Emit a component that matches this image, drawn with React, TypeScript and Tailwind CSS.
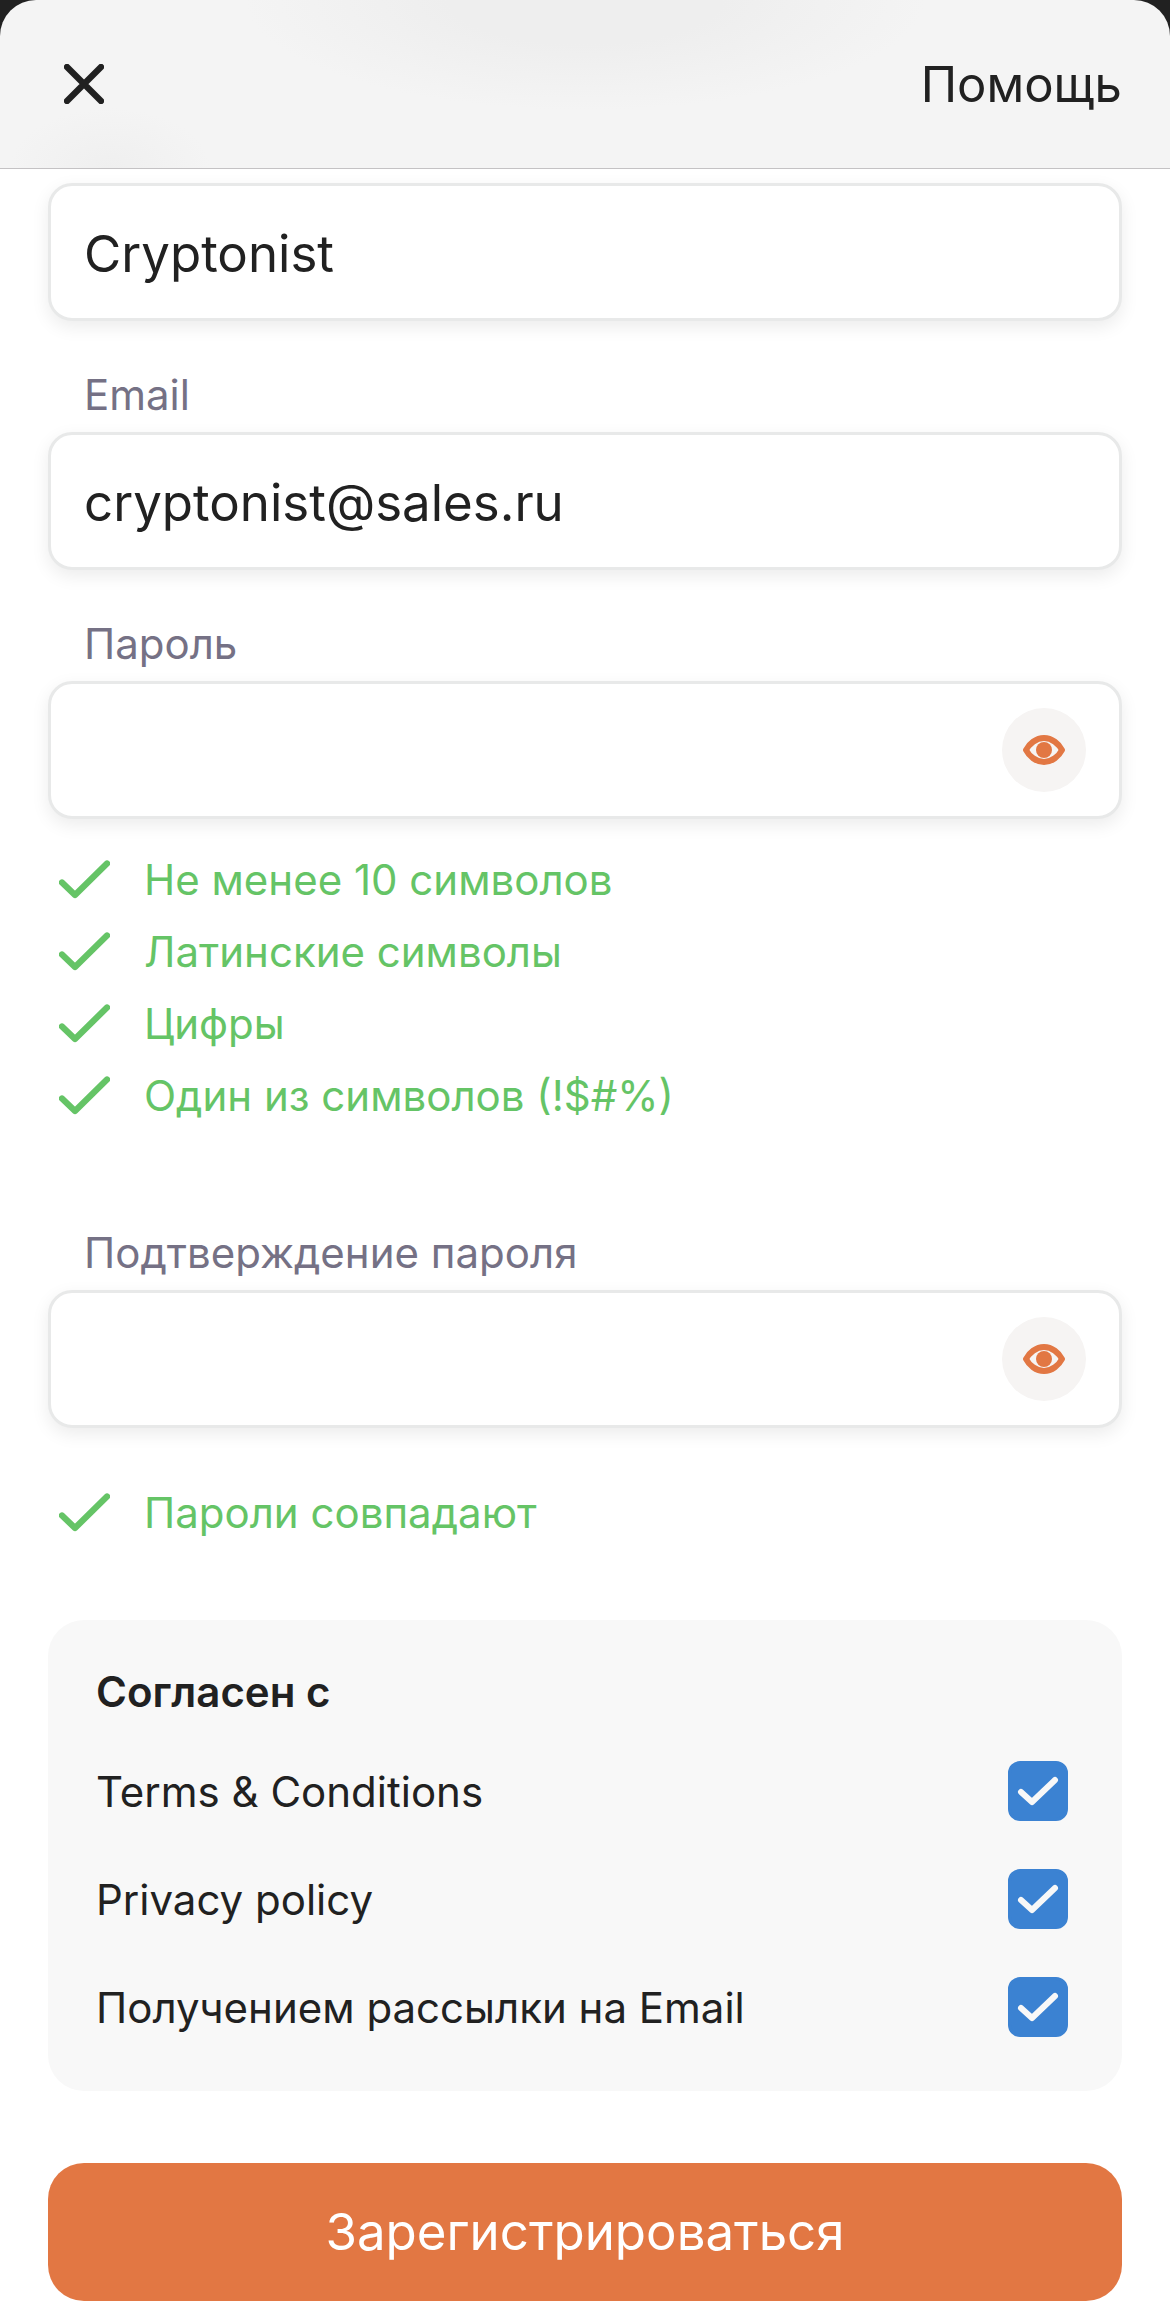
import React, { useState } from 'react';

const rules = ['Не менее 10 символов', 'Латинские символы', 'Цифры', 'Один из символов (!$#%)'];

const agreements = [
  { id: 'terms', label: 'Terms & Conditions' },
  { id: 'privacy', label: 'Privacy policy' },
  { id: 'newsletter', label: 'Получением рассылки на Email' },
];

const inputClass =
  'block w-full h-[138px] px-[33px] pt-[3px] rounded-3xl border-3 border-[#e8e9e9] bg-white text-[51px] text-[#212121] shadow-[0_6px_18px_rgba(0,0,0,0.08)] outline-none';

const CheckItem = ({ text }: { text: string }) => (
  <li className="flex h-[72px] items-center gap-[34px] pl-[11px] text-[42px] text-[#65c466]">
    <svg width="51" height="39" viewBox="0 0 51 39" fill="none" aria-hidden="true">
      <path d="M3 22.5L16 35L48 3.5" stroke="currentColor" strokeWidth="6.3" strokeLinecap="round" strokeLinejoin="round" />
    </svg>
    <span>{text}</span>
  </li>
);

const PasswordField = ({ id, label }: { id: string; label: string }) => {
  const [visible, setVisible] = useState(false);

  return (
    <div>
      <label htmlFor={id} className="block px-9 pb-3 text-[42px] leading-[51px] text-[#757185]">
        {label}
      </label>
      <div className="relative">
        <input id={id} type={visible ? 'text' : 'password'} className={inputClass} />
        <button
          type="button"
          aria-label="Показать пароль"
          onClick={() => setVisible(!visible)}
          className="absolute right-9 top-[27px] flex size-[84px] items-center justify-center rounded-full bg-[#f6f4f3]"
        >
          <svg width="42" height="30" viewBox="0 0 42 30" fill="none" aria-hidden="true">
            <path
              d="M3 15C6 9 13 3 21 3C29 3 36 9 39 15C36 21 29 27 21 27C13 27 6 21 3 15Z"
              stroke="#e27743"
              strokeWidth="6"
              strokeLinejoin="round"
            />
            <circle cx="21" cy="15" r="8" fill="#e27743" />
          </svg>
        </button>
      </div>
    </div>
  );
};

const App = () => {
  return (
    <div className="min-h-screen bg-white font-['Inter','Liberation_Sans',sans-serif] text-[#212121]">
      <div className="bg-[#212121]">
        <header className="flex h-[169px] items-center justify-between rounded-t-[36px] border-b border-[#c4c2c4] bg-[#f4f4f4] bg-[radial-gradient(ellipse_340px_110px_at_50%_0%,#eeeeee_40%,transparent),radial-gradient(ellipse_100px_60px_at_110px_100%,#efefef,transparent)] pl-16 pr-12">
          <button type="button" aria-label="Закрыть">
            <svg width="40" height="40" viewBox="0 0 40 40" fill="none" aria-hidden="true">
              <path d="M3 3L37 37M37 3L3 37" stroke="#212121" strokeWidth="6.3" strokeLinecap="round" />
            </svg>
          </button>
          <a href="#help" className="pt-[2px] text-[49px]">
            Помощь
          </a>
        </header>
      </div>

      <form className="px-12 pb-[17px] pt-[14px]" onSubmit={(e) => e.preventDefault()}>
        <input type="text" aria-label="Имя пользователя" defaultValue="Cryptonist" className={inputClass} />

        <div className="mt-12">
          <label htmlFor="email" className="block px-9 pb-3 text-[42px] leading-[51px] text-[#757185]">
            Email
          </label>
          <input id="email" type="email" defaultValue="cryptonist@sales.ru" className={inputClass} />
        </div>

        <div className="mt-12">
          <PasswordField id="password" label="Пароль" />
        </div>
        <ul className="mt-6">
          {rules.map((rule) => (
            <CheckItem key={rule} text={rule} />
          ))}
        </ul>

        <div className="mt-24">
          <PasswordField id="confirm" label="Подтверждение пароля" />
        </div>
        <ul className="mt-12">
          <CheckItem text="Пароли совпадают" />
        </ul>

        <fieldset className="mt-[72px] rounded-[36px] bg-[#f8f8f8] pb-[30px] pl-12 pr-[54px] pt-9">
          <h2 className="mb-[9px] text-[42px] font-semibold leading-[72px]">Согласен с</h2>
          {agreements.map((item) => (
            <div key={item.id} className="flex h-[108px] items-center justify-between text-[42px]">
              <label htmlFor={item.id}>{item.label}</label>
              <span className="relative size-[60px]">
                <input
                  id={item.id}
                  type="checkbox"
                  defaultChecked
                  className="peer block size-[60px] appearance-none rounded-xl border-3 border-[#3b82d2] bg-white checked:bg-[#3b82d2]"
                />
                <svg
                  className="pointer-events-none absolute inset-0 hidden peer-checked:block"
                  width="60"
                  height="60"
                  viewBox="0 0 60 60"
                  fill="none"
                  aria-hidden="true"
                >
                  <path d="M13 31L24 41L47 19" stroke="#f8f8f8" strokeWidth="6" strokeLinecap="round" strokeLinejoin="round" />
                </svg>
              </span>
            </div>
          ))}
        </fieldset>

        <button type="submit" className="mt-[72px] block h-[138px] w-full rounded-[36px] bg-[#e27743] text-[51px] text-white">
          Зарегистрироваться
        </button>
      </form>
    </div>
  );
};

export default App;
